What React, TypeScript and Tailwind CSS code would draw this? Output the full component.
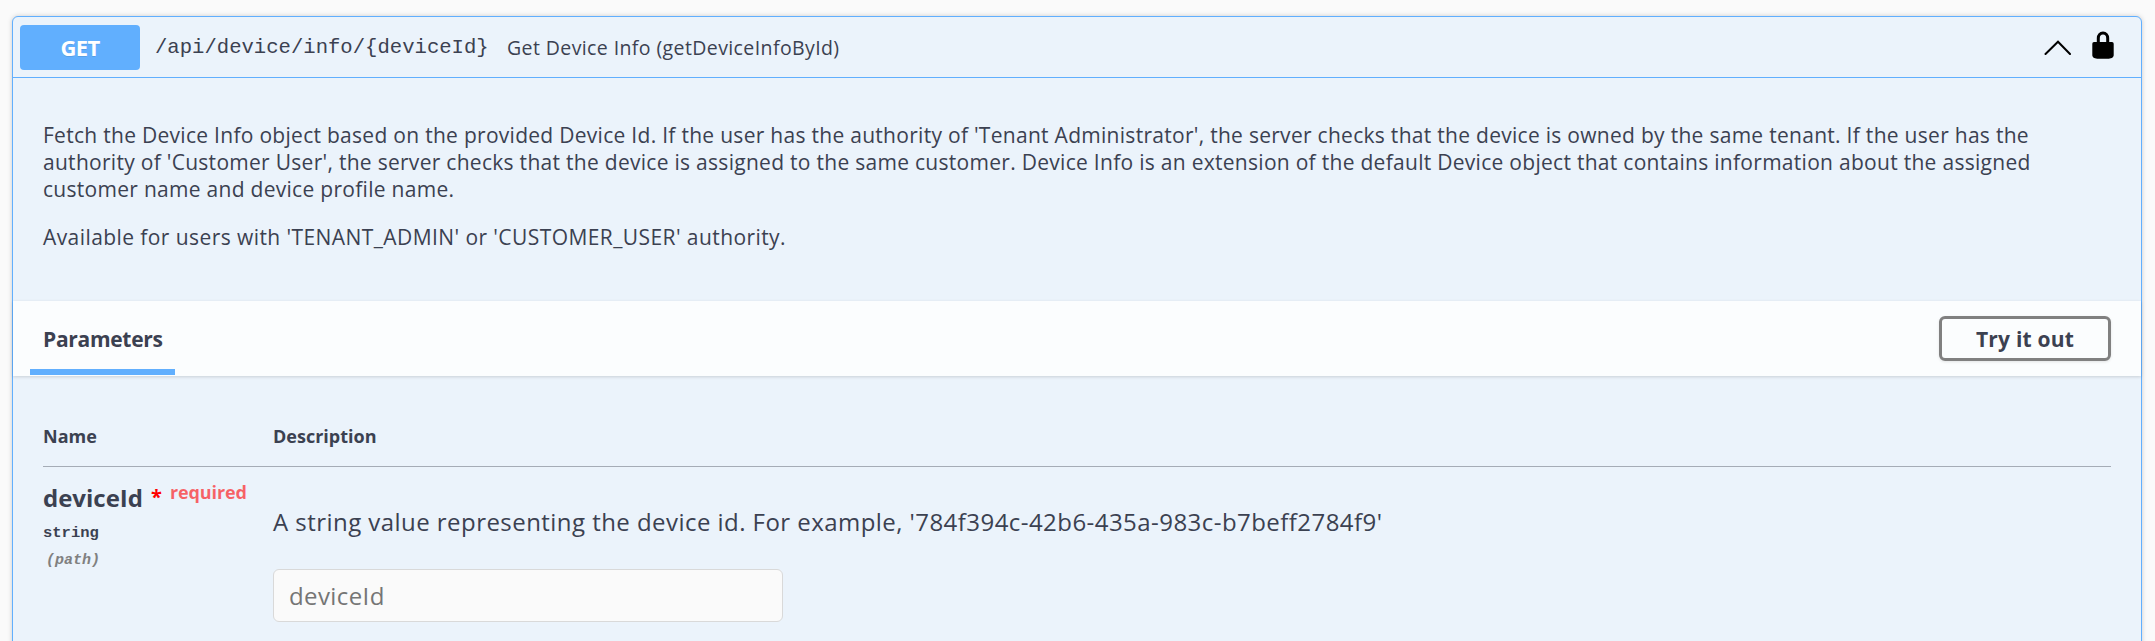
import React from 'react';

function Summary() {
  return (
    <div className="flex h-[61px] items-center border-b border-[#61affe] pl-[7px] pr-[27px]">
      <div className="flex h-[45px] w-[120px] shrink-0 items-center justify-center rounded-[4px] bg-[#61affe] text-[22px] font-bold tracking-[-0.6px] text-white [text-shadow:0_1px_0_rgba(0,0,0,0.1)]">
        <span className="pt-px">GET</span>
      </div>
      <div className="w-[352px] shrink-0 pl-[15px] pt-[3px] font-['Liberation_Mono',monospace] text-[20.6px]">
        /api/device/info/&#123;deviceId&#125;
      </div>
      <div className="flex-1 pl-[15px] pt-px text-[19.5px] tracking-[0.4px]">Get Device Info (getDeviceInfoById)</div>
      <svg className="mr-[21px] h-[15px] w-[27px]" viewBox="0 0 27 15" fill="none" stroke="#000" strokeWidth="2">
        <path d="M1.500 14 14 1.700 26 14" strokeLinecap="round" />
      </svg>
      <svg className="mb-[5px] h-[28px] w-[22px]" viewBox="0 0 22 28">
        <path d="M6.3 12V7.2C6.3 4 8.2 2 11 2s4.7 2 4.7 5.2V12" fill="none" stroke="#000" strokeWidth="3" />
        <path d="M2 11h18a1.7 1.7 0 0 1 1.700 1.700v11.500c0 2.400-3 3.500-6 3.500H6.300c-3 0-6-1.100-6-3.500V12.700A1.700 1.700 0 0 1 2 11Z" fill="#000" />
      </svg>
    </div>
  );
}

function Description() {
  return (
    <div className="flex h-[223px] flex-col gap-[21px] pl-[30px] pt-[44px] text-[21px] leading-[27px]">
      <p className="whitespace-nowrap tracking-[0.285px]">
        Fetch the Device Info object based on the provided Device Id. If the user has the authority of 'Tenant
        Administrator', the server checks that the device is owned by the same tenant. If the user has the
        <br />
        authority of 'Customer User', the server checks that the device is assigned to the same customer. Device Info is
        an extension of the default Device object that contains information about the assigned
        <br />
        customer name and device profile name.
      </p>
      <p className="tracking-[0.42px]">Available for users with 'TENANT_ADMIN' or 'CUSTOMER_USER' authority.</p>
    </div>
  );
}

function SectionHeader() {
  return (
    <div className="flex h-[75px] items-center justify-between bg-white/80 pl-[17px] pr-[30px] shadow-[0_1px_3px_rgba(0,0,0,0.15)]">
      <div className="flex h-full flex-col justify-between">
        <div className="h-[68px] px-[13px] text-[21px] font-bold leading-[76px] tracking-[-0.3px]">Parameters</div>
        <div className="mb-px h-[6px] w-[145px] bg-[#61affe]" />
      </div>
      <button className="flex h-[45px] w-[172px] items-center justify-center rounded-[6px] border-3 border-[#808080] pt-[2px] text-[21px] font-bold tracking-[0.2px] shadow-[0_1px_3px_rgba(0,0,0,0.1)]">
        Try it out
      </button>
    </div>
  );
}

function Parameters() {
  return (
    <div className="pl-[30px] pr-[30px] pt-[30px]">
      <div className="flex h-[61px] items-center border-b border-[rgba(59,65,81,0.4)] text-[18px] font-bold">
        <div className="w-[230px]">Name</div>
        <div>Description</div>
      </div>
      <div className="flex">
        <div className="w-[230px] shrink-0 pt-[14px]">
          <div className="flex whitespace-nowrap text-[24px] font-bold leading-[34px]">
            deviceId
            <span className="ml-[8px] text-[20px] leading-[32px] text-[#f00]">*</span>
            <span className="ml-[8px] text-[18px] font-bold leading-[22px] tracking-[-0.1px] text-[rgba(255,0,0,0.6)]">required</span>
          </div>
          <div className="pt-[6px] font-['Liberation_Mono',monospace] text-[15.5px] font-bold leading-[24px]">string</div>
          <div className="pl-[3px] pt-[4px] font-['Liberation_Mono',monospace] text-[15px] font-bold italic leading-[24px] text-[#808080]">
            (path)
          </div>
        </div>
        <div>
          <p className="whitespace-nowrap pt-[38px] text-[24px] leading-[34px] tracking-[0.45px]">
            A string value representing the device id. For example, '784f394c-42b6-435a-983c-b7beff2784f9'
          </p>
          <input
            className="mt-[30px] block h-[53px] w-[510px] rounded-[6px] border border-[#d9d9d9] bg-[#fafafa] px-[15px] text-[24px] tracking-[0.4px] placeholder:text-[#757575]"
            placeholder="deviceId"
          />
        </div>
      </div>
    </div>
  );
}

export default function App() {
  return (
    <div className="h-[641px] overflow-hidden bg-[#fafafa] pl-[12px] pr-[13px] pt-[16px] font-['Open_Sans',sans-serif] text-[#3b4151]">
      <div className="h-[700px] w-[2130px] rounded-[6px] border border-[#61affe] bg-[#ebf3fb] shadow-[0_0_5px_rgba(0,0,0,0.19)]">
        <Summary />
        <Description />
        <SectionHeader />
        <Parameters />
      </div>
    </div>
  );
}
